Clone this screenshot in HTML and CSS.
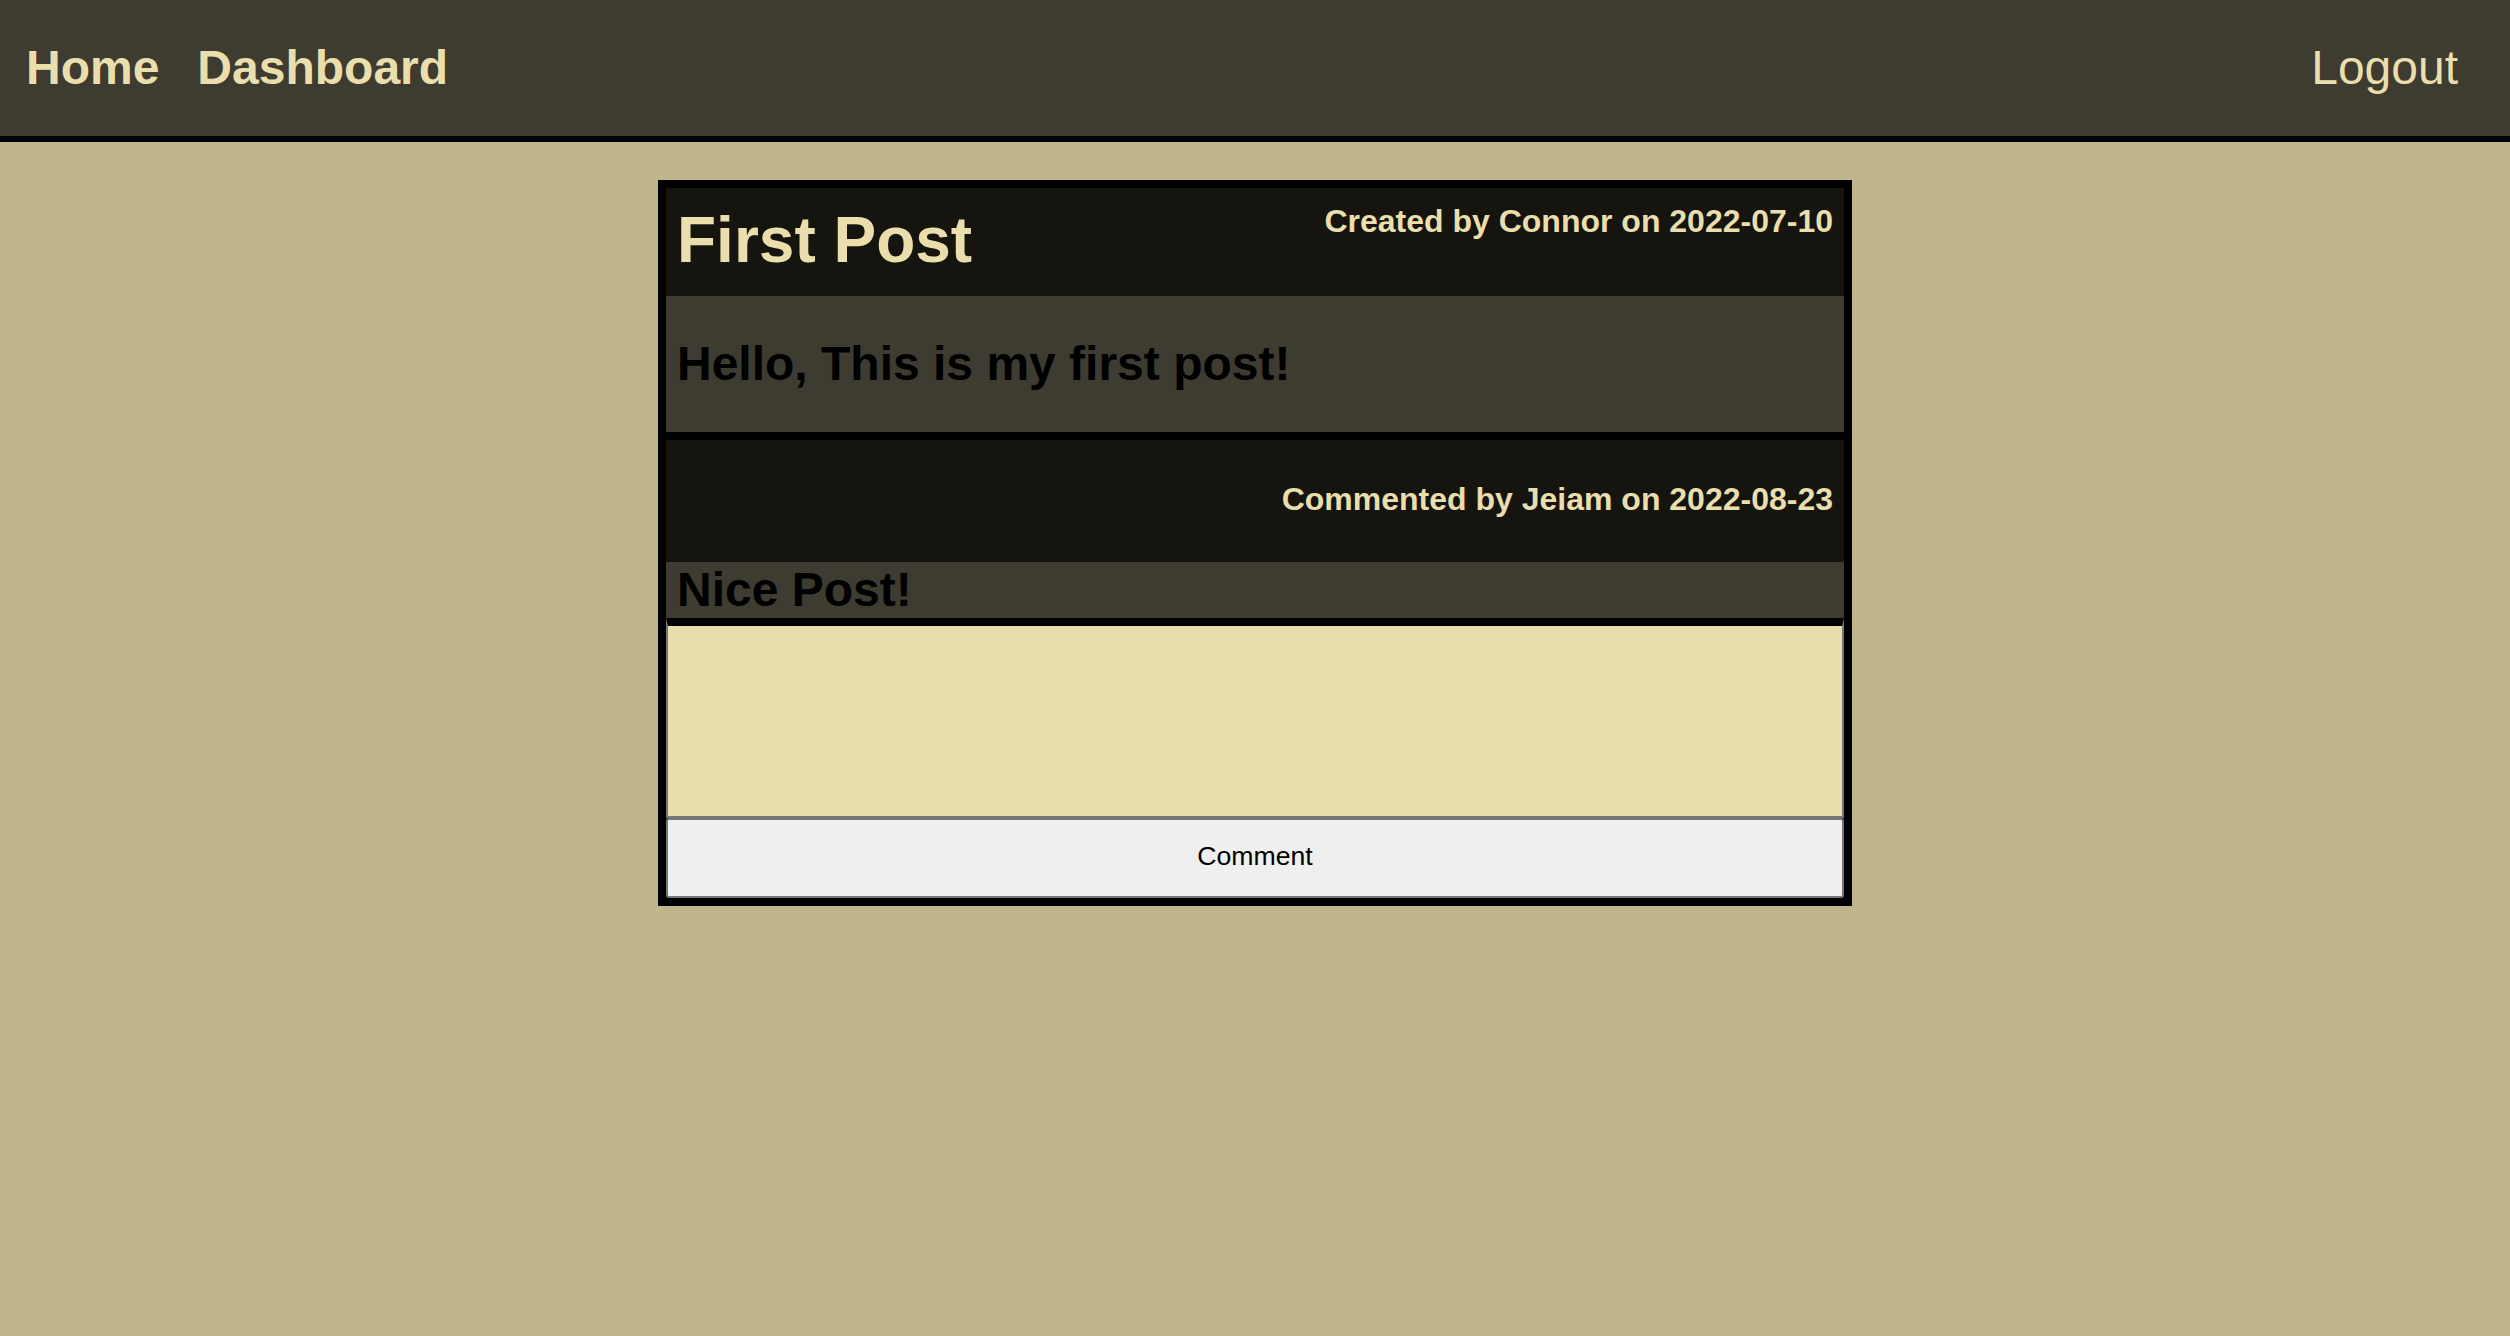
FILE: index.html
```html
<!DOCTYPE html>
<html lang="en">
<head>
<meta charset="utf-8">
<title>First Post</title>
<link rel="stylesheet" href="styles.css">
</head>
<body>
<header class="topbar">
  <nav class="nav-left">
    <a class="nav-link nav-link--bold" href="#">Home</a>
    <a class="nav-link nav-link--bold" href="#">Dashboard</a>
  </nav>
  <a class="nav-link" href="#">Logout</a>
</header>
<main class="page">
  <article class="post">
    <div class="post-head">
      <h1 class="post-title">First Post</h1>
      <p class="post-meta">Created by Connor on 2022-07-10</p>
    </div>
    <div class="post-body">
      <h2 class="post-text">Hello, This is my first post!</h2>
    </div>
    <section class="comment">
      <div class="comment-head">
        <p class="post-meta">Commented by Jeiam on 2022-08-23</p>
      </div>
      <div class="comment-body">
        <h2 class="comment-text">Nice Post!</h2>
      </div>
    </section>
    <form class="comment-form">
      <textarea class="comment-input"></textarea>
      <button class="comment-btn" type="button">Comment</button>
    </form>
  </article>
</main>
</body>
</html>
```
FILE: styles.css
```css
* {
  box-sizing: border-box;
}

html, body {
  margin: 0;
  padding: 0;
}

body {
  background: #c0b68d;
  font-family: "Liberation Sans", Arial, sans-serif;
  min-height: 1336px;
}

.topbar {
  display: flex;
  justify-content: space-between;
  align-items: center;
  height: 142px;
  padding: 0 52px 2px 26px;
  background: #3e3b30;
  border-bottom: 6px solid #000;
}

.nav-left {
  display: flex;
  gap: 38px;
}

.nav-link {
  color: #e9deac;
  text-decoration: none;
  font-size: 48px;
  line-height: 55px;
  font-weight: 400;
}

.nav-link--bold {
  font-weight: 700;
}

.page {
  padding-top: 38px;
}

.post {
  width: 1194px;
  margin: 0 auto;
  border: 8px solid #000;
  background: #000;
}

.post-head {
  display: flex;
  justify-content: space-between;
  align-items: flex-start;
  height: 108px;
  padding: 15px 11px 0 11px;
  background: #15140f;
}

.post-title {
  margin: 0;
  font-size: 64px;
  line-height: 74px;
  font-weight: 700;
  color: #e9deac;
}

.post-meta {
  margin: 0;
  font-size: 32px;
  line-height: 37px;
  font-weight: 700;
  color: #e9deac;
}

.post-body {
  height: 136px;
  padding: 40px 11px 0 11px;
  background: #3e3b30;
}

.post-text,
.comment-text {
  margin: 0;
  font-size: 48px;
  font-weight: 700;
  color: #000;
}

.post-text {
  line-height: 55px;
}

.comment {
  border-top: 8px solid #000;
}

.comment-head {
  display: flex;
  justify-content: flex-end;
  height: 122px;
  padding: 41px 11px 0 11px;
  background: #15140f;
}

.comment-body {
  height: 56px;
  padding: 2px 11px 0 11px;
  background: #3e3b30;
}

.comment-text {
  line-height: 52px;
}

.comment-form {
  display: flex;
  flex-direction: column;
  margin: 0;
}

.comment-input {
  display: block;
  width: 100%;
  height: 200px;
  margin: 0;
  padding: 2px;
  resize: none;
  background: #e9deac;
  border-style: solid;
  border-color: #000 #767676 #767676 #767676;
  border-width: 8px 2px 2px 2px;
  font-family: "Liberation Sans", Arial, sans-serif;
}

.comment-btn {
  display: block;
  width: 100%;
  height: 80px;
  margin: 0;
  padding: 21px 0 24px;
  background: #efefef;
  border: 2px solid #767676;
  border-radius: 3px;
  color: #000;
  font-family: "Liberation Sans", Arial, sans-serif;
  font-size: 26.67px;
  line-height: 31px;
}
```
